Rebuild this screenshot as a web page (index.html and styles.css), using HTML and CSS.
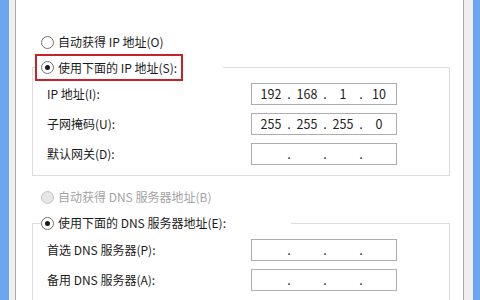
FILE: index.html
```
<!DOCTYPE html>
<html lang="zh-CN">
<head>
<meta charset="utf-8">
<title>IP 设置</title>
<link rel="stylesheet" href="styles.css">
</head>
<body>
<div class="frame">
  <div class="edge-blue-l"></div>
  <div class="edge-gray-l"></div>
  <div class="panel">
    <div class="opt"><span class="radio"></span><span>自动获得 IP 地址(O)</span></div>
    <fieldset class="group g1">
      <legend class="lg1"><span class="hl"><span class="radio on"></span><span>使用下面的 IP 地址(S):</span></span></legend>
      <div class="rows">
        <label>IP 地址(I):</label>
        <div class="ip"><span class="seg">192</span><span class="dot">.</span><span class="seg">168</span><span class="dot">.</span><span class="seg">1</span><span class="dot">.</span><span class="seg">10</span></div>
        <label>子网掩码(U):</label>
        <div class="ip"><span class="seg">255</span><span class="dot">.</span><span class="seg">255</span><span class="dot">.</span><span class="seg">255</span><span class="dot">.</span><span class="seg">0</span></div>
        <label>默认网关(D):</label>
        <div class="ip"><span class="seg"></span><span class="dot">.</span><span class="seg"></span><span class="dot">.</span><span class="seg"></span><span class="dot">.</span><span class="seg"></span></div>
      </div>
    </fieldset>
    <div class="opt disabled"><span class="radio"></span><span>自动获得 DNS 服务器地址(B)</span></div>
    <fieldset class="group g2">
      <legend class="lg2"><span class="radio on"></span><span>使用下面的 DNS 服务器地址(E):</span></legend>
      <div class="rows">
        <label>首选 DNS 服务器(P):</label>
        <div class="ip"><span class="seg"></span><span class="dot">.</span><span class="seg"></span><span class="dot">.</span><span class="seg"></span><span class="dot">.</span><span class="seg"></span></div>
        <label>备用 DNS 服务器(A):</label>
        <div class="ip"><span class="seg"></span><span class="dot">.</span><span class="seg"></span><span class="dot">.</span><span class="seg"></span><span class="dot">.</span><span class="seg"></span></div>
      </div>
    </fieldset>
  </div>
  <div class="edge-gray-r"></div>
  <div class="edge-blue-r"></div>
</div>
</body>
</html>
```
FILE: styles.css
```
html, body {
  margin: 0;
  padding: 0;
  width: 480px;
  height: 300px;
  overflow: hidden;
  background: #fff;
}
body {
  font-family: "Noto Sans CJK SC", "Noto Sans", sans-serif;
  font-size: 12px;
  line-height: 16px;
  color: #1b1b1b;
}
.frame {
  display: flex;
  width: 480px;
  height: 300px;
}
.edge-blue-l { width: 9px; background: #6da6ee; }
.edge-gray-l { width: 6px; background: #efefef; }
.edge-gray-r { width: 9px; background: #efefef; }
.edge-blue-r { width: 7px; background: #6da6ee; }
.panel {
  width: 447px;
  border-left: 1px solid #a9a9a9;
  border-right: 1px solid #a9a9a9;
  background: #fff;
  padding-top: 33px;
  box-sizing: content-box;
}
.opt {
  display: flex;
  align-items: center;
  gap: 4px;
  height: 18px;
  padding-left: 25px;
}
.opt.disabled {
  color: #a3a3a3;
  margin-top: 12px;
}
.radio {
  width: 13px;
  height: 13px;
  box-sizing: border-box;
  border: 1px solid #727272;
  border-radius: 50%;
  background: #fff;
  display: inline-flex;
  align-items: center;
  justify-content: center;
  flex: none;
}
.radio.on::after {
  content: "";
  width: 5px;
  height: 5px;
  border-radius: 50%;
  background: #1a1a1a;
}
.opt.disabled .radio {
  border-color: #c4c4c4;
  background: #e6e6e6;
}
.group {
  margin: 3px 13px 0 16px;
  padding: 0;
  border: 1px solid #dcdcdc;
  min-width: 0;
}
.g2 {
  margin-top: 8px;
}
.lg1 {
  margin-left: 2px;
  padding: 0 40px 0 0;
}
.hl {
  display: flex;
  align-items: center;
  gap: 4px;
  height: 27px;
  box-sizing: border-box;
  border: 2px solid #c8212a;
  padding: 0 4px 0 4px;
}
.lg2 {
  margin-left: 8px;
  padding: 0 65px 0 0;
  display: flex;
  align-items: center;
  gap: 4px;
  height: 18px;
}
.rows {
  display: grid;
  grid-template-columns: 204px 146px;
  grid-auto-rows: 22px;
  row-gap: 8px;
  align-items: center;
  padding: 2px 0 10px 14px;
}
.g2 .rows {
  padding-top: 7px;
}
.ip {
  height: 22px;
  box-sizing: border-box;
  border: 1px solid #abadb3;
  display: flex;
  align-items: center;
  padding-left: 3px;
  color: #222;
  font-size: 12.5px;
}
.seg {
  width: 32px;
  text-align: center;
}
.dot {
  width: 4px;
  text-align: center;
}
```
